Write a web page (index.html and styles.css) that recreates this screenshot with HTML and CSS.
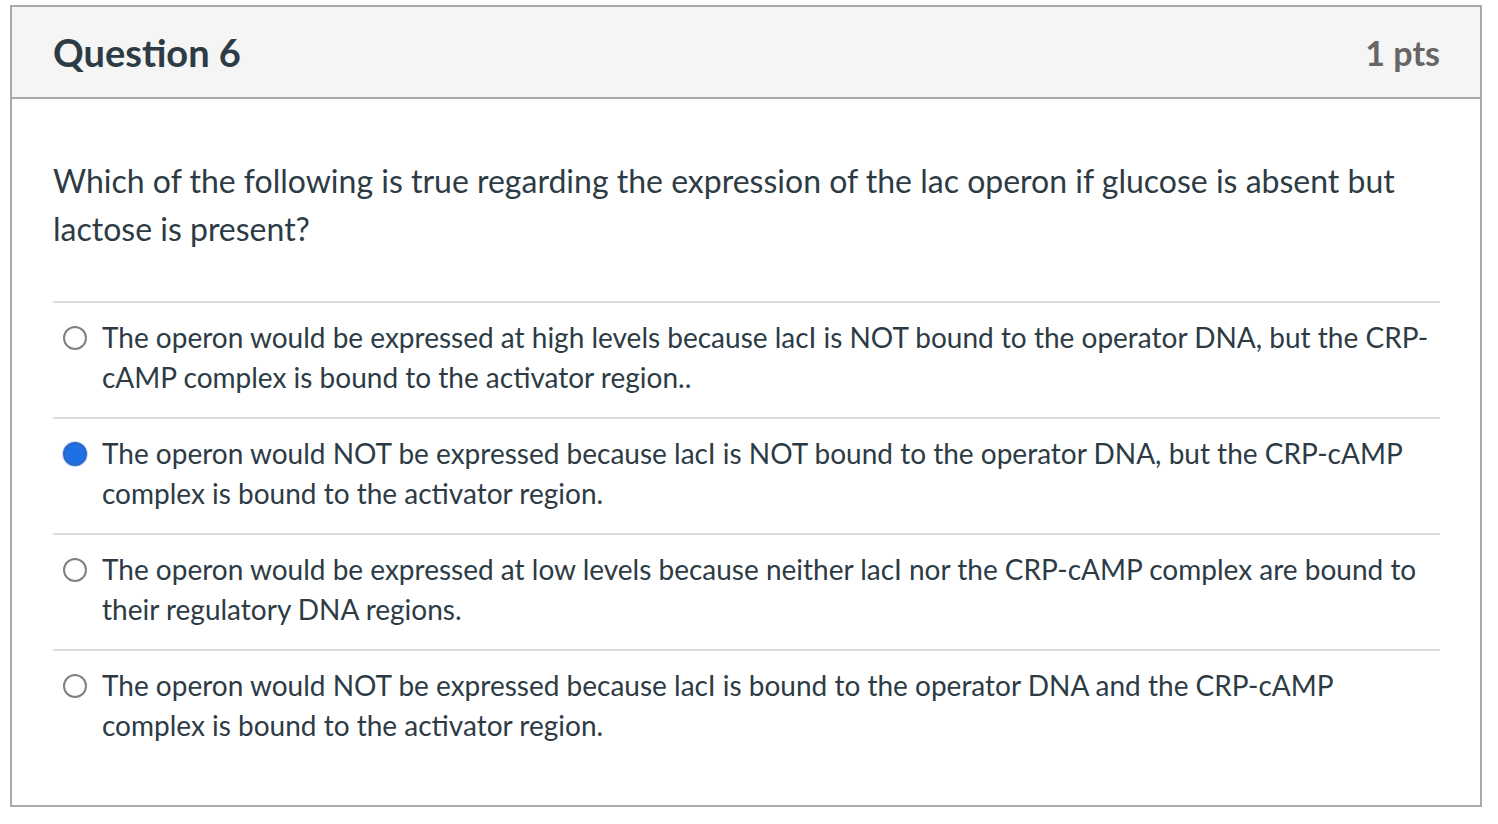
FILE: index.html
```html
<!DOCTYPE html>
<html>
<head>
<meta charset="utf-8">
<link rel="stylesheet" href="styles.css">
</head>
<body>
<div class="question">
  <div class="header">
    <h2 class="title">Question 6</h2>
    <div class="pts">1 pts</div>
  </div>
  <div class="content">
    <p class="text">Which of the following is true regarding the expression of the lac operon if glucose is absent but lactose is present?</p>
    <div class="answers">
      <div class="answer">
        <span class="radio"></span>
        <span class="label">The operon would be expressed at high levels because lacI is NOT bound to the operator DNA, but the CRP-cAMP complex is bound to the activator region..</span>
      </div>
      <div class="answer">
        <span class="radio checked"></span>
        <span class="label">The operon would NOT be expressed because lacI is NOT bound to the operator DNA, but the CRP-cAMP complex is bound to the activator region.</span>
      </div>
      <div class="answer">
        <span class="radio"></span>
        <span class="label">The operon would be expressed at low levels because neither lacI nor the CRP-cAMP complex are bound to their regulatory DNA regions.</span>
      </div>
      <div class="answer">
        <span class="radio"></span>
        <span class="label">The operon would NOT be expressed because lacI is bound to the operator DNA and the CRP-cAMP complex is bound to the activator region.</span>
      </div>
    </div>
  </div>
</div>
</body>
</html>
```

FILE: styles.css
```css
html, body {
  margin: 0;
  padding: 0;
  background: #ffffff;
}
body {
  padding: 5px 16px 0 10px;
  font-family: Lato, "Liberation Sans", sans-serif;
  color: #2d3b45;
}
.question {
  border: 2px solid #aaaaaa;
  width: 1468px;
  height: 798px;
  box-sizing: content-box;
}
.header {
  display: flex;
  justify-content: space-between;
  align-items: center;
  height: 90px;
  background: #f5f5f5;
  border-bottom: 2px solid #aaaaaa;
  padding: 0 40px 0 41px;
}
.title {
  margin: 0;
  font-size: 38px;
  font-weight: 700;
  color: #2d3b45;
}
.pts {
  font-size: 34px;
  font-weight: 700;
  color: #666666;
}
.content {
  padding: 58px 40px 0 41px;
}
.text {
  margin: 0 0 48px 0;
  font-size: 32px;
  line-height: 48px;
}
.answers {
  display: flex;
  flex-direction: column;
}
.answer {
  display: flex;
  align-items: flex-start;
  border-top: 2px solid #dddddd;
  padding: 14px 0 20px 0;
}
.radio {
  flex: none;
  width: 24px;
  height: 24px;
  border: 2px solid #808080;
  border-radius: 50%;
  margin: 9px 15px 0 10px;
  box-sizing: border-box;
  background: #fff;
}
.radio.checked {
  background: #1f6fe5;
  border: 2px solid #2e68c5;
  box-shadow: 0 0 0 1px #c6dafc;
}
.label {
  font-size: 28px;
  line-height: 40px;
}
```
